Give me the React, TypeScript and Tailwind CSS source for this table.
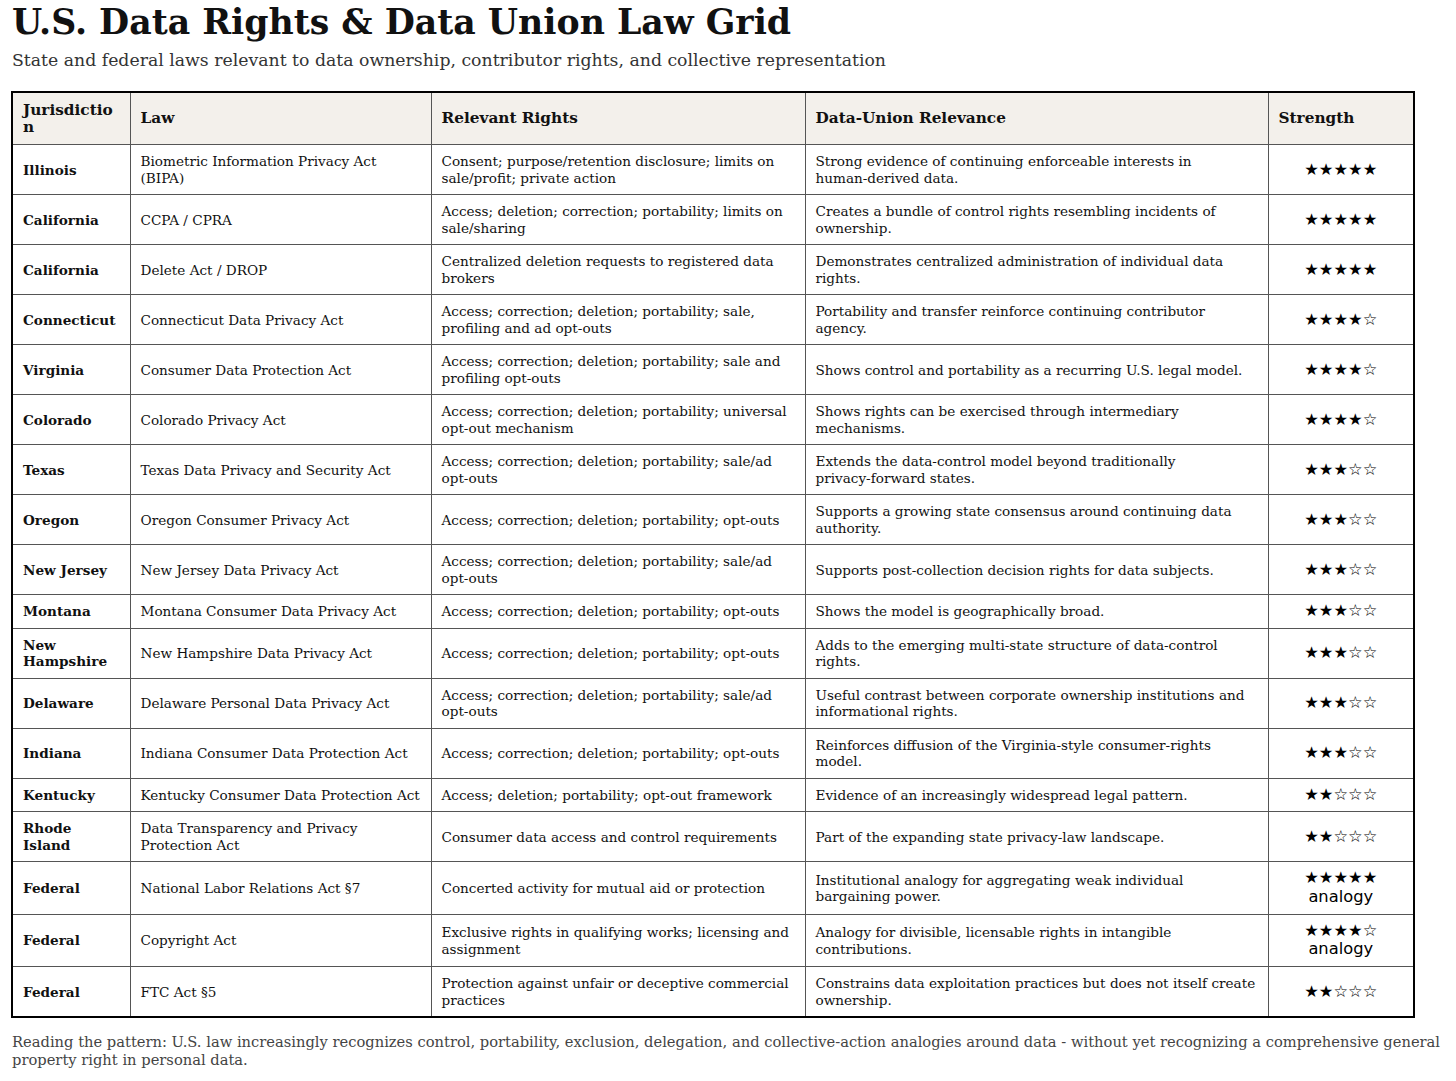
import React from 'react';

type Row = {
  place: string;
  law: string;
  rights: string;
  relevance: string;
  stars: number;
  analogy?: boolean;
};

const rows: Row[] = [
  { place: 'Illinois', law: 'Biometric Information Privacy Act (BIPA)', rights: 'Consent; purpose/retention disclosure; limits on sale/profit; private action', relevance: 'Strong evidence of continuing enforceable interests in human-derived data.', stars: 5 },
  { place: 'California', law: 'CCPA / CPRA', rights: 'Access; deletion; correction; portability; limits on sale/sharing', relevance: 'Creates a bundle of control rights resembling incidents of ownership.', stars: 5 },
  { place: 'California', law: 'Delete Act / DROP', rights: 'Centralized deletion requests to registered data brokers', relevance: 'Demonstrates centralized administration of individual data rights.', stars: 5 },
  { place: 'Connecticut', law: 'Connecticut Data Privacy Act', rights: 'Access; correction; deletion; portability; sale, profiling and ad opt-outs', relevance: 'Portability and transfer reinforce continuing contributor agency.', stars: 4 },
  { place: 'Virginia', law: 'Consumer Data Protection Act', rights: 'Access; correction; deletion; portability; sale and profiling opt-outs', relevance: 'Shows control and portability as a recurring U.S. legal model.', stars: 4 },
  { place: 'Colorado', law: 'Colorado Privacy Act', rights: 'Access; correction; deletion; portability; universal opt-out mechanism', relevance: 'Shows rights can be exercised through intermediary mechanisms.', stars: 4 },
  { place: 'Texas', law: 'Texas Data Privacy and Security Act', rights: 'Access; correction; deletion; portability; sale/ad opt-outs', relevance: 'Extends the data-control model beyond traditionally privacy-forward states.', stars: 3 },
  { place: 'Oregon', law: 'Oregon Consumer Privacy Act', rights: 'Access; correction; deletion; portability; opt-outs', relevance: 'Supports a growing state consensus around continuing data authority.', stars: 3 },
  { place: 'New Jersey', law: 'New Jersey Data Privacy Act', rights: 'Access; correction; deletion; portability; sale/ad opt-outs', relevance: 'Supports post-collection decision rights for data subjects.', stars: 3 },
  { place: 'Montana', law: 'Montana Consumer Data Privacy Act', rights: 'Access; correction; deletion; portability; opt-outs', relevance: 'Shows the model is geographically broad.', stars: 3 },
  { place: 'New Hampshire', law: 'New Hampshire Data Privacy Act', rights: 'Access; correction; deletion; portability; opt-outs', relevance: 'Adds to the emerging multi-state structure of data-control rights.', stars: 3 },
  { place: 'Delaware', law: 'Delaware Personal Data Privacy Act', rights: 'Access; correction; deletion; portability; sale/ad opt-outs', relevance: 'Useful contrast between corporate ownership institutions and informational rights.', stars: 3 },
  { place: 'Indiana', law: 'Indiana Consumer Data Protection Act', rights: 'Access; correction; deletion; portability; opt-outs', relevance: 'Reinforces diffusion of the Virginia-style consumer-rights model.', stars: 3 },
  { place: 'Kentucky', law: 'Kentucky Consumer Data Protection Act', rights: 'Access; deletion; portability; opt-out framework', relevance: 'Evidence of an increasingly widespread legal pattern.', stars: 2 },
  { place: 'Rhode Island', law: 'Data Transparency and Privacy Protection Act', rights: 'Consumer data access and control requirements', relevance: 'Part of the expanding state privacy-law landscape.', stars: 2 },
  { place: 'Federal', law: 'National Labor Relations Act §7', rights: 'Concerted activity for mutual aid or protection', relevance: 'Institutional analogy for aggregating weak individual bargaining power.', stars: 5, analogy: true },
  { place: 'Federal', law: 'Copyright Act', rights: 'Exclusive rights in qualifying works; licensing and assignment', relevance: 'Analogy for divisible, licensable rights in intangible contributions.', stars: 4, analogy: true },
  { place: 'Federal', law: 'FTC Act §5', rights: 'Protection against unfair or deceptive commercial practices', relevance: 'Constrains data exploitation practices but does not itself create ownership.', stars: 2 },
];

const th = 'border border-[#555] bg-[#f3f0eb] px-[10px] py-2 text-left align-middle text-[15.3px] font-bold leading-[17px] break-words';
const td = 'border border-[#555] px-[10px] py-2 align-middle text-[13.6px] leading-[16.5px]';

function stars(n: number) {
  return '★'.repeat(n) + '☆'.repeat(5 - n);
}

// hyphenated words stay on one line, as in the source table
function noHyphenBreak(text: string) {
  return text.split(' ').map((w, i) => (
    <React.Fragment key={i}>
      {i > 0 && ' '}
      {w.includes('-') ? <span className="whitespace-nowrap">{w}</span> : w}
    </React.Fragment>
  ));
}

export default function App() {
  return (
    <div className="min-h-screen bg-white pl-[11px] pr-[4px] pt-[2px] text-[#111] font-['DejaVu_Serif',serif]">
      <h1 className="pl-[1px] text-[34.7px] font-bold leading-[1.17]">U.S. Data Rights &amp; Data Union Law Grid</h1>
      <p className="mt-[7px] pl-[1px] text-[17.3px] leading-[1.17] text-[#333]">
        State and federal laws relevant to data ownership, contributor rights, and collective representation
      </p>

      <table className="mt-[21px] w-[1402px] table-fixed border-collapse border-2 border-black">
        <colgroup>
          <col className="w-[118px]" />
          <col className="w-[301px]" />
          <col className="w-[374px]" />
          <col className="w-[463px]" />
          <col className="w-[146px]" />
        </colgroup>
        <thead>
          <tr className="h-[53px]">
            <th className={th}>Jurisdiction</th>
            <th className={th}>Law</th>
            <th className={th}>Relevant Rights</th>
            <th className={th}>Data-Union Relevance</th>
            <th className={th}>Strength</th>
          </tr>
        </thead>
        <tbody>
          {rows.map((r, i) => (
            <tr key={i}>
              <td className={`${td} font-bold`}>{r.place}</td>
              <td className={td}>{r.law}</td>
              <td className={td}>{r.rights}</td>
              <td className={td}>{noHyphenBreak(r.relevance)}</td>
              <td className="border border-[#555] px-[10px] py-2 text-center align-middle font-['DejaVu_Sans',sans-serif] text-[16.3px] text-black">
                <div className="leading-[16.5px]">{stars(r.stars)}</div>
                {r.analogy && <div className="leading-[19px]">analogy</div>}
              </td>
            </tr>
          ))}
        </tbody>
      </table>

      <p className="mt-[15px] pb-4 pl-[1px] text-[14.7px] leading-[18px] text-[#444]">
        Reading the pattern: U.S. law increasingly recognizes control, portability, exclusion, delegation, and collective-action analogies around data - without yet recognizing a comprehensive general property right in personal data.
      </p>
    </div>
  );
}
